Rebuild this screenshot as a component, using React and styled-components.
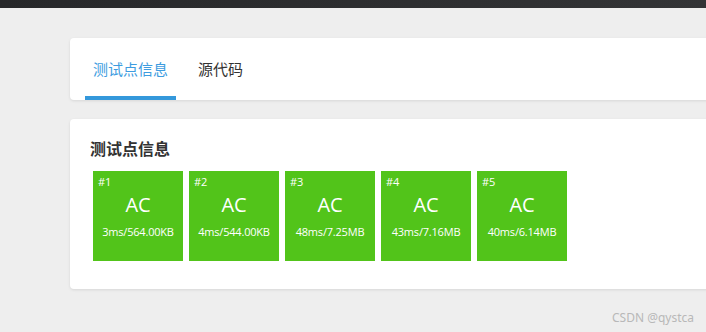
import React from 'react'
import styled, { createGlobalStyle } from 'styled-components'

const GlobalStyle = createGlobalStyle`
	html, body {
		margin: 0;
		padding: 0;
		background: #eeeeee;
		overflow: hidden;
		font-family: "Open Sans", "Noto Sans CJK SC", sans-serif;
	}
`

const Page = styled.div`
	position: relative;
	width: 706px;
	height: 332px;
`

const TopBar = styled.div`
	height: 8px;
	background: linear-gradient(90deg, #27282a, #333436);
`

const Main = styled.div`
	display: flex;
	flex-direction: column;
	gap: 19px;
	padding: 30px 0 0 70px;
`

const Card = styled.div`
	width: 660px;
	background: #fff;
	border-radius: 4px;
	box-shadow: 0 1px 3px rgba(0, 0, 0, 0.1);
	box-sizing: border-box;
`

const TabBar = styled(Card)`
	display: flex;
	gap: 14px;
	height: 62px;
	padding-left: 15px;
`

const Tab = styled.div`
	display: flex;
	align-items: center;
	padding: 2px 8px 0 8px;
	white-space: nowrap;
	font-size: 15px;
	color: ${props => (props.active ? '#3d9ce0' : '#333')};
	border-bottom: 4px solid ${props => (props.active ? '#3498db' : 'transparent')};
	font-family: "Noto Sans CJK SC", sans-serif;
`

const Panel = styled(Card)`
	height: 170px;
	padding: 17px 20px 0 20px;
`

const Title = styled.h3`
	margin: 0 0 8px 0;
	font-size: 16px;
	line-height: 24px;
	font-weight: bold;
	color: #333;
	font-family: "Noto Sans CJK SC", sans-serif;
`

const Tiles = styled.div`
	display: flex;
	flex-wrap: wrap;
`

const Tile = styled.div`
	width: 90px;
	height: 90px;
	margin: 3px;
	background: #52c41a;
	color: #fff;
	display: flex;
	flex-direction: column;
	align-items: center;
	box-sizing: border-box;
	padding-top: 3px;
`

const Num = styled.div`
	align-self: flex-start;
	padding-left: 5px;
	font-size: 11px;
	line-height: 16px;
`

const Status = styled.div`
	font-size: 20px;
	line-height: 28px;
	margin-top: 1px;
`

const Usage = styled.div`
	font-size: 11px;
	line-height: 16px;
	margin-top: 5px;
	letter-spacing: -0.2px;
`

const Watermark = styled.div`
	position: absolute;
	right: 12px;
	bottom: 6px;
	font-size: 12px;
	color: #b8b8b8;
	font-family: "Noto Sans", sans-serif;
`

const cases = [
	['3ms', '564.00KB'],
	['4ms', '544.00KB'],
	['48ms', '7.25MB'],
	['43ms', '7.16MB'],
	['40ms', '6.14MB'],
]

const App = () => (
	<Page>
		<GlobalStyle />
		<TopBar />
		<Main>
			<TabBar>
				<Tab active>测试点信息</Tab>
				<Tab>源代码</Tab>
			</TabBar>
			<Panel>
				<Title>测试点信息</Title>
				<Tiles>
					{cases.map(([time, mem], i) => (
						<Tile key={i}>
							<Num>#{i + 1}</Num>
							<Status>AC</Status>
							<Usage>{time}/{mem}</Usage>
						</Tile>
					))}
				</Tiles>
			</Panel>
		</Main>
		<Watermark>CSDN @qystca</Watermark>
	</Page>
)

export default App
